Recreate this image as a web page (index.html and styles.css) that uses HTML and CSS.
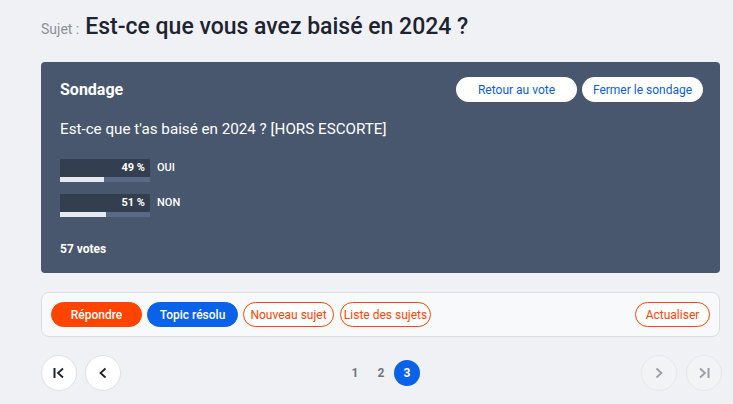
FILE: index.html
```html
<!DOCTYPE html>
<html lang="fr">
<head>
<meta charset="utf-8">
<link rel="stylesheet" href="styles.css">
</head>
<body>
<div class="page">
  <h1 class="subject"><span class="subject-label">Sujet :</span> <span class="subject-title">Est-ce que vous avez baisé en 2024 ?</span></h1>

  <section class="poll">
    <div class="poll-head">
      <h2 class="poll-title">Sondage</h2>
      <div class="poll-actions">
        <button class="pill-white">Retour au vote</button>
        <button class="pill-white">Fermer le sondage</button>
      </div>
    </div>
    <p class="poll-question">Est-ce que t'as baisé en 2024 ? [HORS ESCORTE]</p>
    <div class="result">
      <div class="bar">
        <div class="bar-top">49 %</div>
        <div class="bar-track"><div class="bar-fill" style="width:49%"></div></div>
      </div>
      <span class="result-label">OUI</span>
    </div>
    <div class="result">
      <div class="bar">
        <div class="bar-top">51 %</div>
        <div class="bar-track"><div class="bar-fill" style="width:51%"></div></div>
      </div>
      <span class="result-label">NON</span>
    </div>
    <p class="votes">57 votes</p>
  </section>

  <div class="toolbar">
    <button class="btn btn-orange">Répondre</button>
    <button class="btn btn-blue">Topic résolu</button>
    <button class="btn btn-outline">Nouveau sujet</button>
    <button class="btn btn-outline btn-list">Liste des sujets</button>
    <span class="spacer"></span>
    <button class="btn btn-outline btn-refresh">Actualiser</button>
  </div>

  <nav class="pager">
    <div class="pager-side">
      <button class="circle"><svg width="14" height="14" viewBox="0 0 14 14"><path d="M2.5 2v10" stroke="#1d2430" stroke-width="2" fill="none"/><path d="M11 2.5 6 7l5 4.5" stroke="#1d2430" stroke-width="1.8" fill="none"/></svg></button>
      <button class="circle"><svg width="14" height="14" viewBox="0 0 14 14"><path d="M9.5 2.5 4.5 7l5 4.5" stroke="#1d2430" stroke-width="1.8" fill="none"/></svg></button>
    </div>
    <div class="pages">
      <span class="page-num">1</span>
      <span class="page-num">2</span>
      <span class="page-num current">3</span>
    </div>
    <div class="pager-side">
      <button class="circle disabled"><svg width="14" height="14" viewBox="0 0 14 14"><path d="M4.5 2.5 9.5 7l-5 4.5" stroke="#9a9ea6" stroke-width="1.8" fill="none"/></svg></button>
      <button class="circle disabled"><svg width="14" height="14" viewBox="0 0 14 14"><path d="M3 2.5 8 7l-5 4.5" stroke="#9a9ea6" stroke-width="1.8" fill="none"/><path d="M11.5 2v10" stroke="#9a9ea6" stroke-width="2" fill="none"/></svg></button>
    </div>
  </nav>
</div>
</body>
</html>
```

FILE: styles.css
```css
* { box-sizing: border-box; }
html, body { margin: 0; padding: 0; }
body {
  background: #f0f1f4;
  font-family: Roboto, "Liberation Sans", Arial, sans-serif;
  color: #1d2430;
}
.page {
  width: 679px;
  margin-left: 41px;
}
.subject {
  margin: 0;
  height: 62px;
  display: flex;
  align-items: baseline;
  padding-top: 13px;
  font-weight: 500;
}
.subject-label {
  font-size: 14px;
  color: #8c8f96;
  font-weight: 400;
  margin-right: 6px;
}
.subject-title {
  font-size: 23px;
  color: #1d2430;
}
.poll {
  background: #48566e;
  border-radius: 4px;
  padding: 14px 17px 18px 19px;
  color: #fff;
  height: 211px;
}
.poll-head {
  display: flex;
  align-items: center;
  justify-content: space-between;
  height: 27px;
}
.poll-title {
  margin: 0;
  font-size: 16px;
  font-weight: 700;
}
.poll-actions { display: flex; gap: 5px; }
button {
  font-family: inherit;
  cursor: pointer;
}
.pill-white {
  background: #fff;
  border: none;
  border-radius: 13px;
  height: 25px;
  padding: 0;
  width: 121px;
  color: #0b5ed7;
  font-size: 12px;
}
.poll-question {
  margin: 17px 0 21px;
  font-size: 15.2px;
}
.result {
  display: flex;
  align-items: flex-start;
  gap: 7px;
  margin-bottom: 12px;
}
.bar { width: 90px; }
.bar-top {
  background: #333e4f;
  height: 18px;
  font-size: 11px;
  font-weight: 700;
  text-align: right;
  padding-right: 5px;
  line-height: 18px;
}
.bar-track {
  height: 5px;
  background: #5a6a86;
}
.bar-fill {
  height: 100%;
  background: #e6e9ef;
}
.result-label {
  font-size: 11px;
  font-weight: 500;
  line-height: 18px;
}
.votes {
  margin: 25px 0 0;
  font-size: 12px;
  font-weight: 700;
}
.toolbar {
  margin-top: 19px;
  background: #f8f9fa;
  border: 1px solid #dcdde1;
  border-radius: 8px;
  height: 45px;
  display: flex;
  align-items: center;
  padding: 0 9px;
  gap: 5px;
}
.spacer { flex: 1; }
.btn {
  height: 25px;
  border-radius: 13px;
  font-size: 12px;
  padding: 0;
  width: 91px;
  border: 1px solid transparent;
}
.btn-orange { background: #ff4300; color: #fff; font-weight: 500; border-color: #ff4300; }
.btn-blue { background: #0a62e8; color: #fff; font-weight: 500; border-color: #0a62e8; }
.btn-outline { background: #fff; color: #ff4300; border-color: #ff4300; }
.btn-list { margin-left: 1px; }
.btn-refresh { width: 75px; }
.pager {
  margin-top: 17px;
  display: flex;
  align-items: center;
  height: 38px;
}
.pager-side { display: flex; gap: 8px; }
.pager-side:last-child { gap: 9px; margin-left: auto; margin-right: -2px; }
.circle {
  width: 36px;
  height: 36px;
  border-radius: 50%;
  background: #fff;
  border: 1px solid #dfe0e3;
  display: flex;
  align-items: center;
  justify-content: center;
  padding: 0;
}
.circle.disabled {
  background: #f2f3f5;
  border-color: #e6e7ea;
}
.pages {
  display: flex;
  align-items: center;
  margin-left: 221px;
}
.page-num {
  width: 26px;
  height: 26px;
  display: flex;
  align-items: center;
  justify-content: center;
  font-size: 12px;
  font-weight: 700;
  color: #707580;
}
.page-num.current {
  background: #0a62e8;
  color: #fff;
  border-radius: 50%;
}
```
